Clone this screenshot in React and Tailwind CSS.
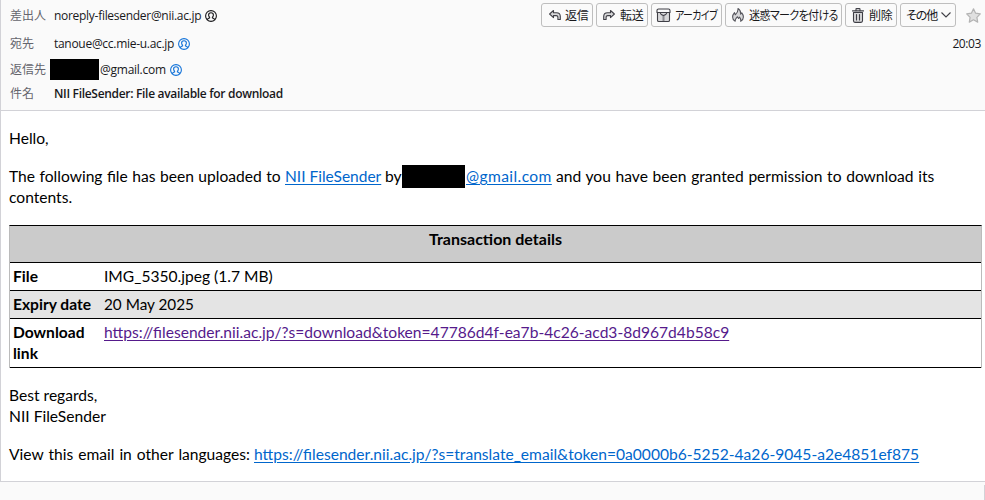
import React from 'react'

const bodyFont = "font-['Lato','Liberation_Sans',sans-serif]"
const uiFont = "font-['Open_Sans','Noto_Sans_CJK_JP',sans-serif]"

// ─── Icons ────────────────────────────────────────────────────────────────────
const ReplyIcon = ({ flip }) => (
  <svg width="12" height="12" viewBox="0 0 12 12" className={`shrink-0 ${flip ? '-scale-x-100' : ''}`} fill="#d8d8da" stroke="#3f3f46" strokeWidth="1.1" strokeLinejoin="round">
    <path d="M.6 5 4.500 1.500V3.700H7.500C9.900 3.700 11.300 5 11.300 7.500V10.500H8.900V8.600C8.900 7.300 8.400 6.600 7.200 6.600H4.500V8.600Z" />
  </svg>
)

const ArchiveIcon = () => (
  <svg width="15" height="15" viewBox="0 0 15 15" className="shrink-0" fill="#d8d8da" stroke="#3f3f46" strokeWidth="1.1" strokeLinejoin="round">
    <path d="M1.5 4.5h12v7.7c0 .8-.5 1.300-1.300 1.300H2.800c-.8 0-1.300-.5-1.300-1.300z" />
    <path fill="#fafafa" d="M2.600 1h9.800c1 0 1.600.6 1.600 1.500v2H1v-2C1 1.600 1.600 1 2.600 1z" />
    <path fill="none" d="M4 4.500c.3 1.500 1.500 2.500 3.500 3 2-.5 3.200-1.500 3.500-3" />
    <path strokeDasharray="1 1" strokeWidth="2" d="M7.500 7.500v5.500" />
  </svg>
)

const FlameIcon = () => (
  <svg width="12" height="14" viewBox="0 0 12 14" className="shrink-0" fill="#d8d8da" stroke="#55555c" strokeWidth="1.1" strokeLinejoin="round">
    <path d="M3.200 13.300C1.500 12.300.6 10.700.6 8.900.6 7 1.500 5.900 2.500 4.700L3.300 6.800C5 5.300 6.200 3.400 6 .6 8 1.700 8.800 3.600 8.600 6.200L9.800 4.900C10.800 6.200 11.400 7.400 11.400 9c0 1.900-1.100 3.400-2.700 4.300.3-1.600 0-2.800-1.200-4.100l-.9 1.300L5.500 8.800C3.600 10.300 3 11.500 3.200 13.300Z" />
  </svg>
)

const TrashIcon = () => (
  <svg width="12" height="15" viewBox="0 0 12 15" className="shrink-0" fill="none" stroke="#3f3f46" strokeWidth="1.1" strokeLinejoin="round" strokeLinecap="round">
    <path d="M4 2.800V1.200c0-.4.200-.6.600-.6h2.800c.4 0 .6.200.6.600v1.600" />
    <path d="M.6 2.900h10.800" strokeWidth="1.400" />
    <path fill="#d8d8da" d="M1.500 4.500h9v8.300c0 .9-.6 1.600-1.500 1.600H3c-.9 0-1.500-.7-1.500-1.600z" />
    <path d="M4.500 6.500v5.500M7.500 6.500v5.500" />
  </svg>
)

const StarIcon = () => (
  <svg width="15" height="15" viewBox="0 0 15 15" className="shrink-0" fill="#e0e0e0" stroke="#b3b3b3" strokeWidth="1.200" strokeLinejoin="round">
    <path d="m7.500 .8 2.100 4.400 4.700.7-3.400 3.400.8 4.800-4.200-2.300-4.200 2.300.8-4.800L.7 5.900l4.700-.7z" />
  </svg>
)

const PersonIcon = ({ className }) => (
  <svg width="12" height="12" viewBox="0 0 12 12" className={`shrink-0 ${className}`} fill="none" stroke="currentColor" strokeWidth="1.100">
    <circle cx="6" cy="6" r="5.400" />
    <path d="M2.400 9.900C2.400 8.700 3 8.200 4.600 7.900V7.200C3.800 6.500 3.600 5.700 3.600 4.900 3.600 3.500 4.500 2.700 6 2.700s2.400.8 2.400 2.200c0 .8-.2 1.600-1 2.300v.7c1.600.3 2.200.8 2.200 2" />
  </svg>
)

// ─── Header ───────────────────────────────────────────────────────────────────
const ToolButton = ({ className, children }) => (
  <button className={`flex h-6 shrink-0 items-center rounded-[3px] border border-[#bebebe] text-[12px] leading-none whitespace-nowrap text-[#18181b] ${className}`}>
    {children}
  </button>
)

const Label = ({ children }) => (
  <span className="w-[44px] shrink-0 text-[12px] text-[#65656d]">{children}</span>
)

const MessageHeader = () => (
  <header className={`flex h-[111px] justify-between border-b border-[#d2d2d7] bg-[#fafafa] pl-[9px] text-[12px] text-[#18181b] ${uiFont}`}>
    <div className="flex flex-col whitespace-nowrap">
      <div className="mt-[6px] flex h-5 items-center">
        <Label>差出人</Label>
        <span className="w-[147px] tracking-[-0.29px]">noreply-filesender@nii.ac.jp</span>
        <PersonIcon className="ml-1 text-[#18181b]" />
      </div>
      <div className="mt-2 flex h-5 items-center">
        <Label>宛先</Label>
        <span className="w-[120px] tracking-[-0.29px]">tanoue@cc.mie-u.ac.jp</span>
        <PersonIcon className="ml-1 text-[#1373d9]" />
      </div>
      <div className="mt-[5px] flex h-[21px] items-center">
        <span className="w-10 shrink-0 text-[12px] text-[#65656d]">返信先</span>
        <span className="h-[21px] w-[49px] bg-black" />
        <span className="w-[67px] pl-px tracking-[-0.25px]">@gmail.com</span>
        <PersonIcon className="ml-1 text-[#1373d9]" />
      </div>
      <div className="mt-[4px] flex h-5 items-center">
        <Label>件名</Label>
        <span className="font-semibold tracking-[-0.31px]">NII FileSender: File available for download</span>
      </div>
    </div>

    <div className="flex flex-col items-end pt-[3px]">
      <div className="flex items-center">
        <ToolButton className="mr-[3px] w-[52px] gap-[4px] pl-[7px]">
          <ReplyIcon />
          <span className="pt-px tracking-[-0.3px]">返信</span>
        </ToolButton>
        <ToolButton className="mr-[3px] w-[52px] gap-[5px] pl-[6px]">
          <ReplyIcon flip />
          <span className="pt-px tracking-[-0.3px]">転送</span>
        </ToolButton>
        <ToolButton className="mr-[3px] w-[71px] gap-[4px] pl-[4px]">
          <ArchiveIcon />
          <span className="origin-left scale-x-[0.82] pt-px tracking-[-0.600px] [font-feature-settings:'palt']">アーカイブ</span>
        </ToolButton>
        <ToolButton className="mr-[3px] w-[117px] gap-[5px] pl-[6px]">
          <FlameIcon />
          <span className="origin-left scale-x-[0.92] pt-px tracking-[-0.700px] [font-feature-settings:'palt']">迷惑マークを付ける</span>
        </ToolButton>
        <ToolButton className="mr-[3px] w-[52px] gap-[5px] pl-[6px]">
          <TrashIcon />
          <span className="pt-px tracking-[-0.3px]">削除</span>
        </ToolButton>
        <ToolButton className="mr-[10px] w-[56px] gap-[4px] pl-[5px]">
          <span className="pt-px tracking-[-1.100px] [font-feature-settings:'palt']">その他</span>
          <svg width="10" height="6" viewBox="0 0 10 6" className="shrink-0" fill="none" stroke="#3f3f46" strokeWidth="1.100"><path d="m.5.5 4.500 4.500 4.500-4.500" /></svg>
        </ToolButton>
        <div className="mr-[4px]"><StarIcon /></div>
      </div>
      <time className="mt-[8px] mr-[4px] tracking-[-0.4px]">20:03</time>
    </div>
  </header>
)

// ─── Transaction table ────────────────────────────────────────────────────────
const Row = ({ label, className, children }) => (
  <div className={`flex border-b border-black pt-[3px] leading-[21px] ${className}`}>
    <div className="w-[94px] shrink-0 pl-[3px] font-bold">{label}</div>
    <div>{children}</div>
  </div>
)

const TransactionDetails = () => (
  <section className="mt-[17px] w-[973px] border-x border-t border-x-[#bbbbbb] border-t-black whitespace-nowrap">
    <h2 className="h-[37px] border-b border-black bg-[#cbcbcb] pt-[2px] text-center text-[16px] font-bold">Transaction details</h2>
    <Row label="File" className="h-[28px]">IMG_5350.jpeg (1.7 MB)</Row>
    <Row label="Expiry date" className="h-[28px] bg-[#e4e4e4]"><span className="text-[15.300px]">20 May 2025</span></Row>
    <Row label={<>Download<br />link</>} className="h-[49px]">
      <a className="text-[#551a8b] underline underline-offset-2">https://filesender.nii.ac.jp/?s=download&amp;token=47786d4f-ea7b-4c26-acd3-8d967d4b58c9</a>
    </Row>
  </section>
)

const App = () => (
  <div className="h-[500px] w-[985px] overflow-hidden bg-[#fafafa]">
    <div className="h-[482px] border-b border-l border-[#d2d2d7] bg-white">
      <MessageHeader />
      <main className={`pt-[17px] pl-2 text-[15.600px] leading-[21px] whitespace-nowrap text-black ${bodyFont}`}>
        <p>Hello,</p>
        <div className="mt-[17px]">
          <div className="flex h-[21px]">
            <span className="w-[276px] [word-spacing:0.5px]">The following file has been uploaded to</span>
            <a className="w-[96px] text-[15.500px] text-[#0066cc] underline underline-offset-2">NII FileSender</a>
            <span className="w-[21px] pl-[4px]">by</span>
            <span className="-mt-[1px] h-[23px] w-[63px] bg-black" />
            <a className="w-[87px] pl-px tracking-[0.4px] text-[#0066cc] underline underline-offset-2">@gmail.com</a>
            <span className="pl-[4px] [word-spacing:0.7px]">and you have been granted permission to download its</span>
          </div>
          <p>contents.</p>
        </div>
        <TransactionDetails />
        <p className="mt-[17px]">Best regards,<br />NII FileSender</p>
        <div className="mt-[17px] flex">
          <span className="w-[245px] [word-spacing:1px]">View this email in other languages:</span>
          <a className="text-[#0066cc] underline underline-offset-2">https://filesender.nii.ac.jp/?s=translate_email&amp;token=0a0000b6-5252-4a26-9045-a2e4851ef875</a>
        </div>
      </main>
    </div>
    <div className="flex h-[18px] justify-end pt-[3px]">
      <div className="w-px bg-[#d2d2d7]" />
    </div>
  </div>
)

export default App
